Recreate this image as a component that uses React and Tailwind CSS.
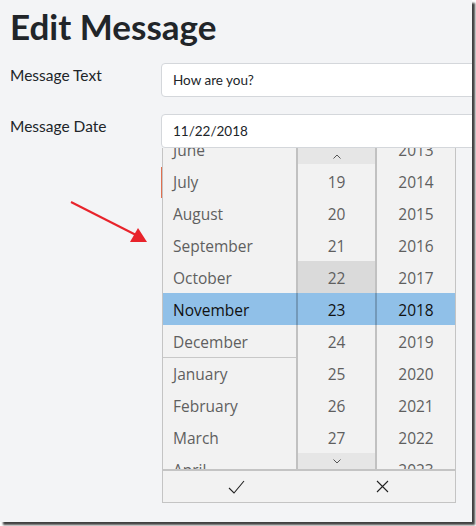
import React from "react";

const months = ["June", "July", "August", "September", "October", "November", "December", "January", "February", "March", "April"];
const days = ["18", "19", "20", "21", "22", "23", "24", "25", "26", "27", "28"];
const years = ["2013", "2014", "2015", "2016", "2017", "2018", "2019", "2020", "2021", "2022", "2023"];
const SELECTED = 5;

const DatePicker = () => {
  return (
    <div className="absolute left-[162px] top-[148px] w-[294px] h-[355px] border-x border-b border-[#c4c4c4] bg-[#f2f2f2] flex flex-col font-['Open_Sans',sans-serif] text-[15.5px] text-[#5f5f5f]">
      <div className="flex h-[321px] overflow-hidden">
        {/* month column */}
        <div className="w-[133px] -mt-[15px] flex flex-col">
          {months.map((m, i) => (
            <div
              key={m}
              className={
                i === SELECTED
                  ? "h-[32px] shrink-0 flex items-center pl-[10px] pt-[3px] bg-[#90c0e8] text-[#111] w-[294px]"
                  : i === 7
                  ? "h-[32px] shrink-0 flex items-center pl-[10px] pt-[2px] border-t border-[#c8c8c8]"
                  : "h-[32px] shrink-0 flex items-center pl-[10px] pt-[3px]"
              }
            >
              {m}
            </div>
          ))}
        </div>
        {/* day column */}
        <div className="relative w-[81px] border-x-2 border-black/20 z-10">
          <div className="-mt-[15px] flex flex-col">
            {days.map((d, i) => (
              <div
                key={d}
                className={
                  i === SELECTED
                    ? "h-[32px] shrink-0 flex items-center justify-center pt-[3px] text-[#111]"
                    : i === 4
                    ? "h-[32px] shrink-0 flex items-center justify-center pt-[3px] bg-[#dadada]"
                    : "h-[32px] shrink-0 flex items-center justify-center pt-[3px]"
                }
              >
                {d}
              </div>
            ))}
          </div>
          <div className="absolute top-0 left-0 right-0 h-[16px] bg-[#e6e6e6] flex items-center justify-center">
            <svg width="8" height="5" viewBox="0 0 8 5" fill="none" stroke="#555" strokeWidth="1">
              <path d="M0.5 4.5 L4 1 L7.5 4.5" />
            </svg>
          </div>
          <div className="absolute bottom-0 left-0 right-0 h-[16px] bg-[#e6e6e6] flex items-center justify-center">
            <svg width="8" height="5" viewBox="0 0 8 5" fill="none" stroke="#555" strokeWidth="1">
              <path d="M0.5 0.5 L4 4 L7.5 0.5" />
            </svg>
          </div>
        </div>
        {/* year column */}
        <div className="w-[78px] -mt-[15px] flex flex-col z-0">
          {years.map((y, i) => (
            <div
              key={y}
              className={
                i === SELECTED
                  ? "h-[32px] shrink-0 flex items-center justify-center pt-[3px] text-[#111]"
                  : "h-[32px] shrink-0 flex items-center justify-center pt-[3px]"
              }
            >
              {y}
            </div>
          ))}
        </div>
      </div>
      <div className="flex flex-1 border-t-2 border-[#c4c4c4]">
        <div className="flex-1 flex items-center justify-center">
          <svg width="17" height="14" viewBox="0 0 17 14" fill="none" stroke="#222" strokeWidth="1.1">
            <path d="M1 8 L6 13 L16 1" />
          </svg>
        </div>
        <div className="flex-1 flex items-center justify-center">
          <svg width="13" height="13" viewBox="0 0 13 13" fill="none" stroke="#222" strokeWidth="1.1">
            <path d="M1 1 L12 12 M12 1 L1 12" />
          </svg>
        </div>
      </div>
    </div>
  );
};

const App = () => {
  return (
    <div className="w-[476px] h-[526px] bg-white">
      <div className="relative w-[472px] h-[522px] overflow-hidden bg-[#f3f4f6] shadow-[3px_3px_2px_rgba(0,0,0,0.75)] font-['Lato',sans-serif] text-[#212529]">
        <h1 className="pl-[10px] pt-[6px] h-[63px] text-[35px] font-bold leading-[40px]">Edit Message</h1>
        <div className="flex flex-col gap-[17px] pl-[10px]">
          <div className="flex">
            <label className="w-[151px] shrink-0 pt-[1px] text-[15.5px]">Message Text</label>
            <div className="w-[330px] shrink-0 h-[34px] bg-white border border-[#d4d7db] rounded-[4px] flex items-center px-[11px] text-[13.5px]">
              How are you?
            </div>
          </div>
          <div className="flex">
            <label className="w-[151px] shrink-0 pt-[1px] text-[15.5px]">Message Date</label>
            <div className="w-[330px] shrink-0 h-[34px] bg-white border border-[#d4d7db] rounded-[4px] flex items-center px-[11px] text-[13.5px]">
              11/22/2018
            </div>
          </div>
        </div>

        <div className="absolute left-[161px] top-[167px] w-px h-[31px] bg-[#e0704f]" />

        <svg className="absolute left-0 top-0" width="160" height="260" viewBox="0 0 160 260">
          <line x1="71" y1="202" x2="136" y2="235" stroke="#e8232b" strokeWidth="2" />
          <polygon points="147,242 130,242 138,228" fill="#e8232b" />
        </svg>

        <DatePicker />
      </div>
    </div>
  );
};

export default App;
